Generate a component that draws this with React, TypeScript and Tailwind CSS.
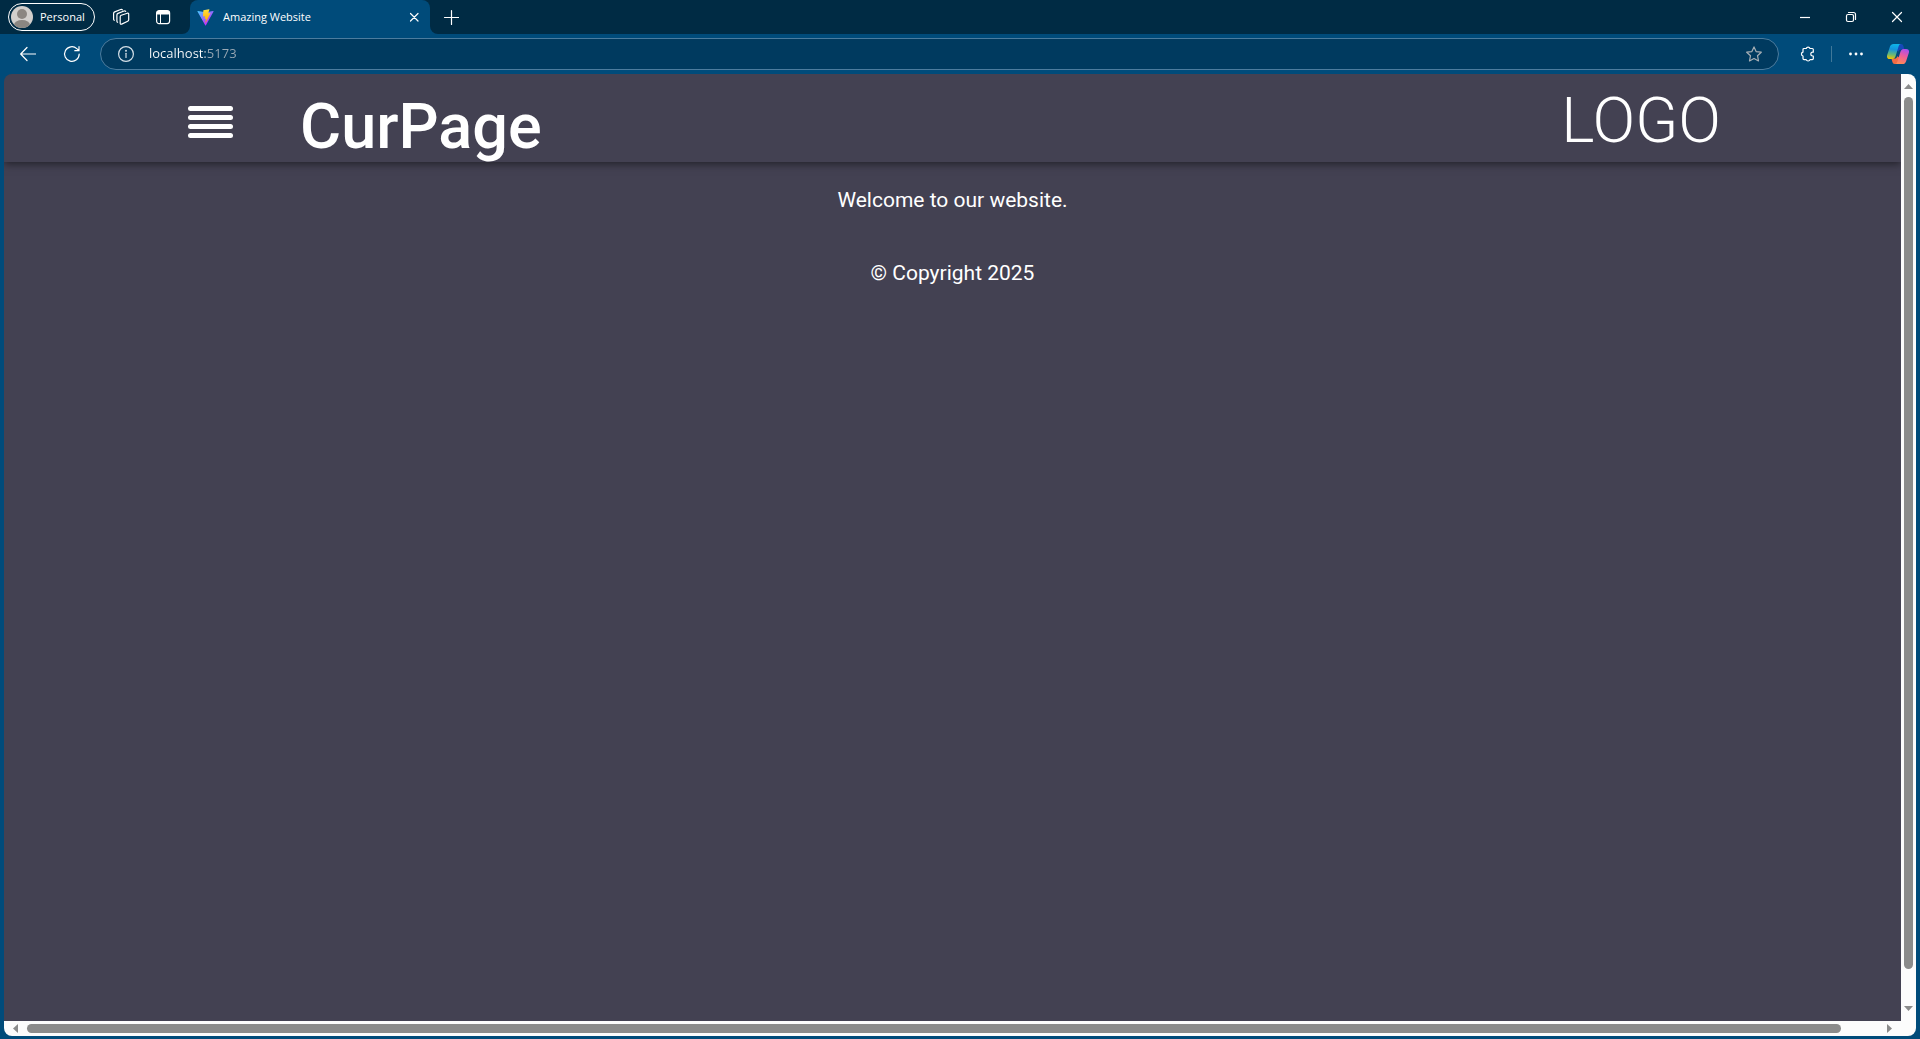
import type { ReactNode } from 'react';

function Icon({ size = 16, children }: { size?: number; children: ReactNode }) {
  return (
    <svg width={size} height={size} viewBox={`0 0 ${size} ${size}`} fill="none" stroke="currentColor" strokeWidth="1.2" strokeLinecap="round" strokeLinejoin="round" aria-hidden="true">
      {children}
    </svg>
  );
}

function ViteLogo() {
  return (
    <svg width="17" height="17" viewBox="0 0 410 404" fill="none" aria-hidden="true">
      <defs>
        <linearGradient id="vite-a" x1="6" y1="33" x2="235" y2="344" gradientUnits="userSpaceOnUse">
          <stop stopColor="#41D1FF" />
          <stop offset="1" stopColor="#BD34FE" />
        </linearGradient>
        <linearGradient id="vite-b" x1="194" y1="9" x2="236" y2="293" gradientUnits="userSpaceOnUse">
          <stop stopColor="#FFEA83" />
          <stop offset="0.083" stopColor="#FFDD35" />
          <stop offset="1" stopColor="#FFA800" />
        </linearGradient>
      </defs>
      <path d="M399.6 59.5 215.6 388.5c-3.8 6.8-13.5 6.8-17.4.1L10.6 59.6c-4.2-7.4 2.1-16.4 10.5-14.9l184.2 32.9c1.2.2 2.4.2 3.5 0l180.3-32.8c8.4-1.5 14.7 7.4 10.5 14.7Z" fill="url(#vite-a)" />
      <path d="M293 1.6 156.800 28.300a5 5 0 0 0-4 4.600l-8.400 141.500a5 5 0 0 0 6.100 5.200l37.900-8.800c3.600-.8 6.800 2.300 6.100 5.900l-11.300 55.200c-.8 3.700 2.700 6.900 6.300 5.800l23.400-7.100c3.700-1.100 7.200 2.100 6.400 5.800l-17.900 86.700c-1.100 5.400 6.100 8.400 9.100 3.700l2-3.100 111-221.500c1.900-3.700-1.400-7.900-5.400-7.200l-39 7.500c-3.700.7-6.800-2.700-5.800-6.300L298.700 7.900c1.100-3.600-2.100-7-5.700-6.300Z" fill="url(#vite-b)" />
    </svg>
  );
}

function CopilotLogo() {
  return (
    <svg width="22" height="20" viewBox="0 0 22 20" aria-hidden="true">
      <defs>
        <linearGradient id="cp-left" x1="6" y1="0" x2="4" y2="15" gradientUnits="userSpaceOnUse">
          <stop stopColor="#0db4e8" />
          <stop offset="0.35" stopColor="#1494dc" />
          <stop offset="0.7" stopColor="#67b878" />
          <stop offset="1" stopColor="#f3c300" />
        </linearGradient>
        <linearGradient id="cp-right" x1="18" y1="5" x2="13" y2="20" gradientUnits="userSpaceOnUse">
          <stop stopColor="#a84ff0" />
          <stop offset="0.45" stopColor="#ed5c9c" />
          <stop offset="1" stopColor="#ff8a55" />
        </linearGradient>
      </defs>
      <path d="M11 0h3c1.400 0 2 .8 2.400 2l1 3.500h-3.200c-1.600 0-2.200.8-2.700 2.300L9 6Z" fill="#1748b8" />
      <path d="M11 20H7.800c-1.400 0-2-.8-2.400-2l-1-3.500h3.200c1.600 0 2.200-.8 2.700-2.300L13 14Z" fill="#f46b43" />
      <path d="M6.600 0H14c-1.500 0-2 1-2.600 2.900L8.800 11.500C8.100 13.800 7.300 15 5.300 15H2.800C.4 15-.5 13.300.2 11L3 2.600C3.600.9 4.600 0 6.600 0Z" fill="url(#cp-left)" />
      <path d="M15.400 20H8c1.500 0 2-1 2.600-2.900l2.600-8.600C13.900 6.200 14.700 5 16.700 5h2.500c2.400 0 3.300 1.700 2.600 4L19 17.400c-.6 1.700-1.600 2.600-3.600 2.600Z" fill="url(#cp-right)" />
    </svg>
  );
}

function TabStrip() {
  return (
    <div className="flex h-[34px] items-center bg-[#002b44]">
      <button className="ml-2 flex h-7 w-[87px] items-center gap-[7px] rounded-full border border-white pl-0.5">
        <svg width="22" height="22" viewBox="0 0 22 22" aria-hidden="true">
          <clipPath id="avatar"><circle cx="11" cy="11" r="11" /></clipPath>
          <g clipPath="url(#avatar)">
            <rect width="22" height="22" fill="#d2cfcc" />
            <circle cx="11" cy="8" r="5" fill="#8b8681" />
            <ellipse cx="11" cy="19" rx="8" ry="5" fill="#8b8681" />
          </g>
        </svg>
        <span className="text-[11px]">Personal</span>
      </button>
      <button aria-label="Workspaces" className="ml-[17px]">
        <Icon size={18}>
          <path d="M9.300 7.200 15.300 5.200c.8-.2 1.400.2 1.400 1v5.600c0 .7-.3 1.200-1 1.500l-6 2.800c-.9.400-1.500 0-1.500-.9V8.700c0-.8.300-1.200 1.100-1.500Z" />
          <path d="M5.600 14.300c-.5-.2-.7-.5-.7-1.100V7c0-.8.300-1.300 1.100-1.600l6-2.400c.8-.3 1.300-.1 1.700.4M2.300 12.300c-.5-.2-.7-.5-.7-1.100V5.500c0-.8.300-1.300 1.100-1.600L8.700 1.500c.8-.3 1.300-.1 1.700.4" />
        </Icon>
      </button>
      <button aria-label="Tab actions menu" className="ml-[25px]">
        <Icon>
          <rect x="1.600" y="1.600" width="13" height="13" rx="2.500" />
          <path d="M2.500 3h11M2.500 4.500h11" strokeWidth="1.800" />
          <path d="M5.500 5v9.500" strokeWidth="1" />
        </Icon>
      </button>
      <div className="ml-[11px] flex h-full items-end text-[#004b7a]">
        <svg width="8" height="8" viewBox="0 0 8 8" fill="currentColor" aria-hidden="true"><path d="M8 0v8H0a8 8 0 0 0 8-8Z" /></svg>
        <div className="flex h-full w-60 items-center rounded-t-lg bg-[#004b7a] pr-2 pl-[7px] text-white">
          <ViteLogo />
          <span className="ml-[9px] flex-1 text-[11px]">Amazing Website</span>
          <button aria-label="Close tab" className="flex"><Icon><path d="m4.500 4.500 7.500 7.500m0-7.500-7.500 7.500" /></Icon></button>
        </div>
        <svg width="8" height="8" viewBox="0 0 8 8" fill="currentColor" aria-hidden="true"><path d="M0 0v8h8a8 8 0 0 1-8-8Z" /></svg>
      </div>
      <button aria-label="New tab" className="ml-[5px]"><Icon><path d="M1.500 8.500h14M8.500 1.500v14" /></Icon></button>
      <div className="ml-auto flex items-center gap-[30px] pr-[15px]">
        <button aria-label="Minimize"><Icon><path d="M3 8.500h10" strokeLinecap="butt" /></Icon></button>
        <button aria-label="Restore">
          <Icon><rect x="3.500" y="5.500" width="7" height="7" rx="1.500" /><path d="M5.500 3.500h5a2 2 0 0 1 2 2v5" /></Icon>
        </button>
        <button aria-label="Close"><Icon><path d="m3.500 3.500 9 9m0-9-9 9" /></Icon></button>
      </div>
    </div>
  );
}

function Toolbar() {
  return (
    <div className="flex h-10 items-center bg-[#004b7a] pr-[11px] pl-5">
      <button aria-label="Back"><Icon><path d="M15.500 8H.8M7 1.500.7 8 7 14.500" /></Icon></button>
      <button aria-label="Refresh" className="ml-[27px]">
        <Icon size={18}><path d="M16.200 9A7.300 7.300 0 1 1 13.800 3.600L16 5.600M16 1.500v4.200h-4.200" /></Icon>
      </button>
      <form className="ml-[19px] flex h-8 flex-1 items-center rounded-full border border-[#4c7c9e] bg-[#003a5f] pr-4 pl-[17px]" onSubmit={(event) => event.preventDefault()}>
        <button type="button" aria-label="Site information" className="text-[#d5e0e8]">
          <Icon><circle cx="8" cy="8" r="7.400" /><path d="M8 7.300v4.200" /><circle cx="8" cy="4.800" r=".4" fill="currentColor" /></Icon>
        </button>
        {/* The host is bright and the port is dimmed by a hard-stop gradient clipped to the text. */}
        <input
          aria-label="Address"
          defaultValue="localhost:5173"
          className="ml-[15px] min-w-0 flex-1 bg-[linear-gradient(to_right,#ffffff_56px,#9aa9b5_56px)] bg-clip-text text-[13px] text-transparent caret-white outline-none"
        />
        <button type="button" aria-label="Add to favorites" className="text-[#a7afb5]">
          <Icon><path d="m8 .9 2.100 4.700 5.200.6-3.800 3.500 1 5.200L8 12.400l-4.500 2.500 1-5.200L.7 6.200l5.200-.6Z" /></Icon>
        </button>
      </form>
      <button aria-label="Extensions" className="ml-[21px]">
        <Icon>
          <path d="M4 2.500h2.200a2 2 0 0 1 3.800 0h2.300a1 1 0 0 1 1 1v2.700h-.6a1.900 1.900 0 0 0 0 3.800h.6v2.600a1 1 0 0 1-1 1H10a2 2 0 0 1-3.800 0H4a1 1 0 0 1-1-1V10a2 2 0 0 1 0-3.900V3.500a1 1 0 0 1 1-1Z" />
        </Icon>
      </button>
      <div className="ml-[15px] h-4 w-px bg-[#407899]" />
      <button aria-label="Settings and more" className="ml-4">
        <Icon><g fill="currentColor" stroke="none"><circle cx="2.500" cy="8" r="1.400" /><circle cx="8" cy="8" r="1.400" /><circle cx="13.500" cy="8" r="1.400" /></g></Icon>
      </button>
      <button aria-label="Copilot" className="ml-[23px]"><CopilotLogo /></button>
    </div>
  );
}

function Arrow({ d, w, h }: { d: string; w: number; h: number }) {
  return (
    <svg width={w} height={h} viewBox={`0 0 ${w} ${h}`} fill="#8b8b8b" className="shrink-0" aria-hidden="true"><path d={d} /></svg>
  );
}

function SitePage() {
  return (
    <div className="min-w-0 flex-1 bg-[#434152] font-['Roboto','Liberation_Sans',sans-serif] text-white">
      <header className="flex h-[88px] items-center pr-[180px] pl-[184px] shadow-[0_2px_8px_rgba(0,0,0,0.5)]">
        <button aria-label="Open menu" className="mt-2 flex w-[45px] flex-col gap-1">
          <span className="h-[5px] rounded-full bg-white" />
          <span className="h-[5px] rounded-full bg-white" />
          <span className="h-[5px] rounded-full bg-white" />
          <span className="h-[5px] rounded-full bg-white" />
        </button>
        <h1 className="mt-4 ml-[67px] text-[63px] leading-none font-medium">CurPage</h1>
        <div className="mt-1 ml-auto text-[63px] leading-none font-light">LOGO</div>
      </header>
      <main className="pt-[23px] text-center text-[21px] leading-[30px]">
        <p>Welcome to our website.</p>
      </main>
      <footer className="pt-[43px] text-center text-[21px] leading-[30px]">
        <p>© Copyright 2025</p>
      </footer>
    </div>
  );
}

export default function App() {
  return (
    <div className="flex h-screen flex-col bg-[#004b7a] font-['Open_Sans','Noto_Sans',sans-serif] text-white">
      <TabStrip />
      <Toolbar />
      <div className="mx-1 mb-[3px] flex min-h-0 flex-1 flex-col overflow-hidden rounded-lg">
        <div className="flex min-h-0 flex-1">
          <SitePage />
          <div className="flex w-[15px] flex-col items-center bg-[#fcfcfc] pt-[10px] pb-[10px]">
            <Arrow w={9} h={5} d="M4.500 0 9 5H0Z" />
            <div className="mt-2 mb-[37px] w-[9px] flex-1 rounded-full bg-[#8b8b8b]" />
            <Arrow w={9} h={5} d="M0 0h9L4.500 5Z" />
          </div>
        </div>
        <div className="flex h-[15px] items-center bg-[#fcfcfc] pr-6 pl-[9px]">
          <Arrow w={5} h={9} d="M5 0v9L0 4.500Z" />
          <div className="mr-[46px] ml-[9px] h-[9px] flex-1 rounded-full bg-[#8b8b8b]" />
          <Arrow w={5} h={9} d="M0 0v9l5-4.500Z" />
        </div>
      </div>
    </div>
  );
}
